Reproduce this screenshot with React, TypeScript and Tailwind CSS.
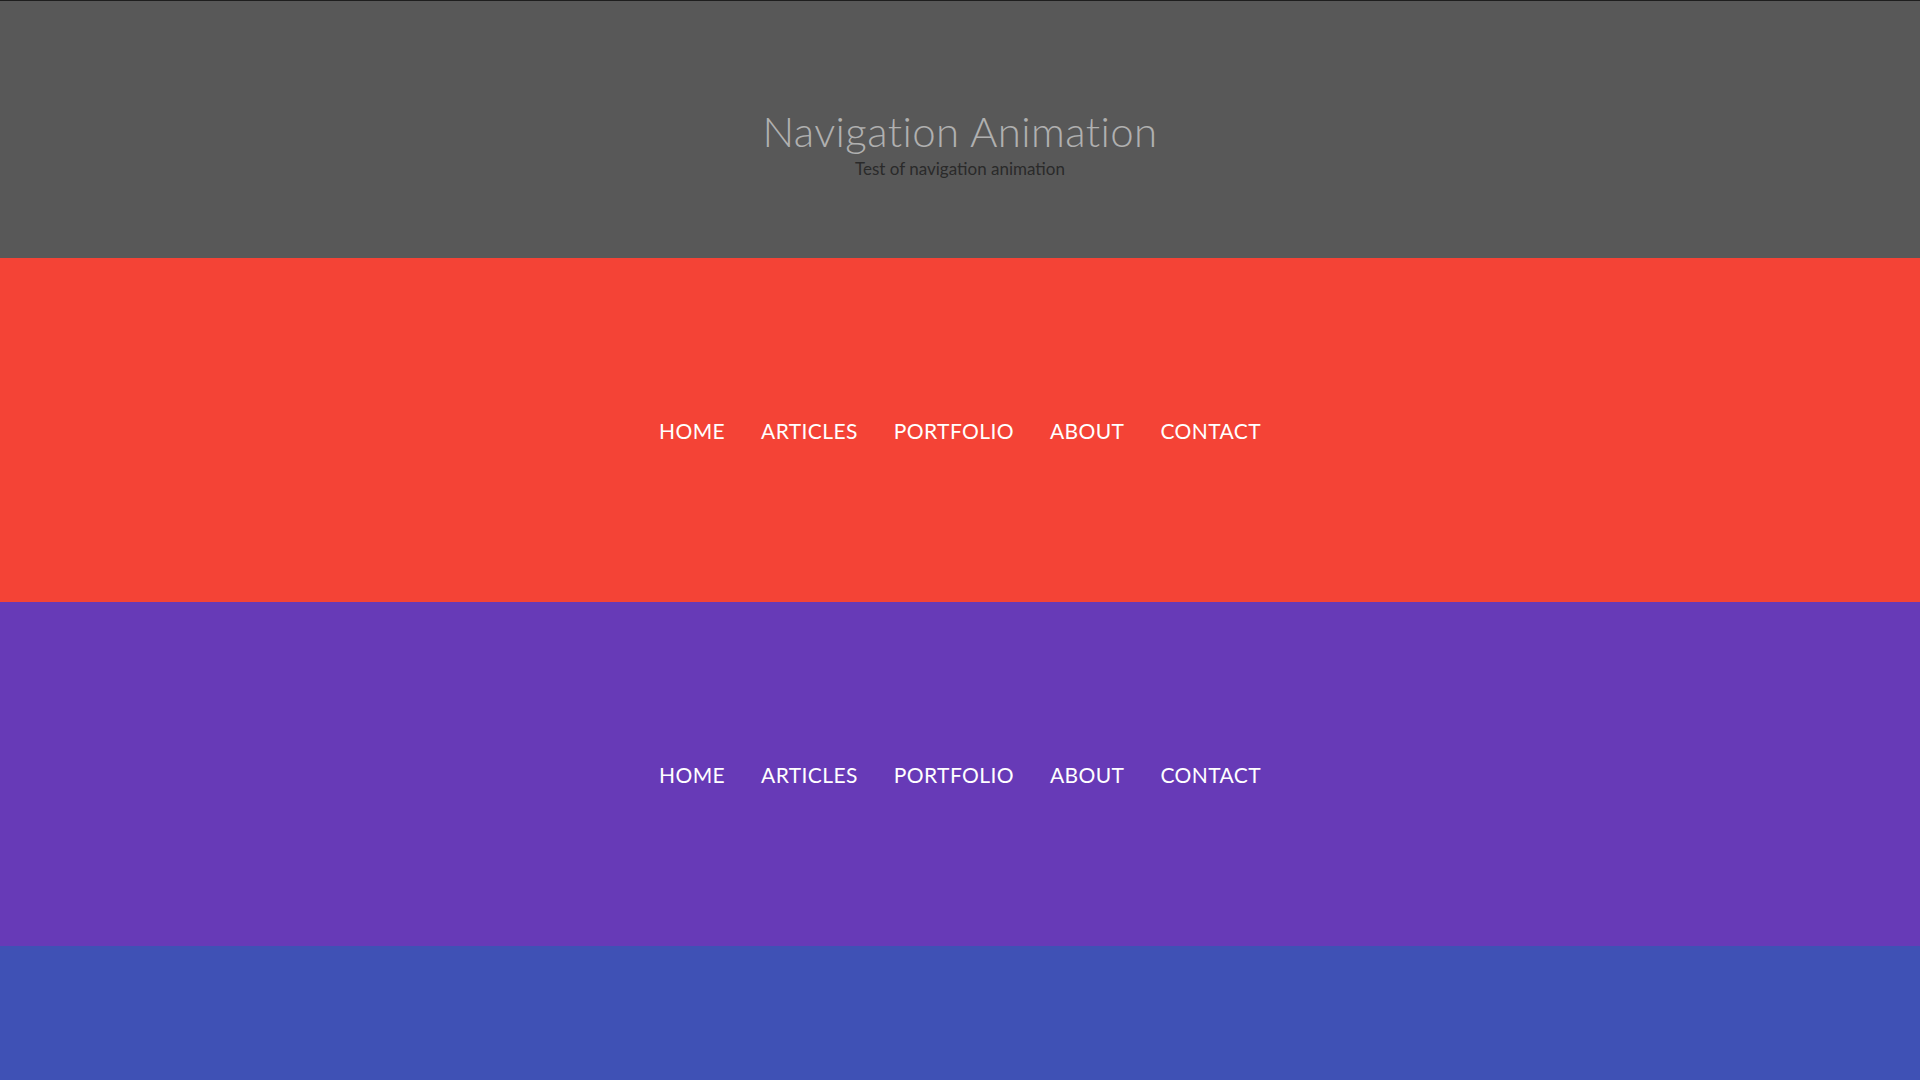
const links = ['HOME', 'ARTICLES', 'PORTFOLIO', 'ABOUT', 'CONTACT']

function Nav({ bg }: { bg: string }) {
    return (
        <section className={`${bg} h-[344px] flex items-center justify-center`}>
            <nav className="flex gap-[36px]">
                {links.map((link) => (
                    <a key={link} href="#" className="text-white text-[21px] leading-none tracking-[0.4px]">{link}</a>
                ))}
            </nav>
        </section>
    )
}

export default function App() {
    return (
        <div className="min-h-screen bg-[#3f51b5] font-['Lato','Open_Sans',sans-serif] overflow-hidden">
            <header className="h-[258px] bg-[#585858] border-t border-[#1e1e1e] flex flex-col items-center pt-[107px]">
                <h1 className="text-[42px] leading-[46px] font-light text-[#b0b0b0] tracking-[0.4px]">Navigation Animation</h1>
                <p className="text-[17px] leading-[20px] mt-[5px] text-[#2a2a2a]">Test of navigation animation</p>
            </header>
            <Nav bg="bg-[#f44336]" />
            <Nav bg="bg-[#673ab7]" />
        </div>
    )
}
